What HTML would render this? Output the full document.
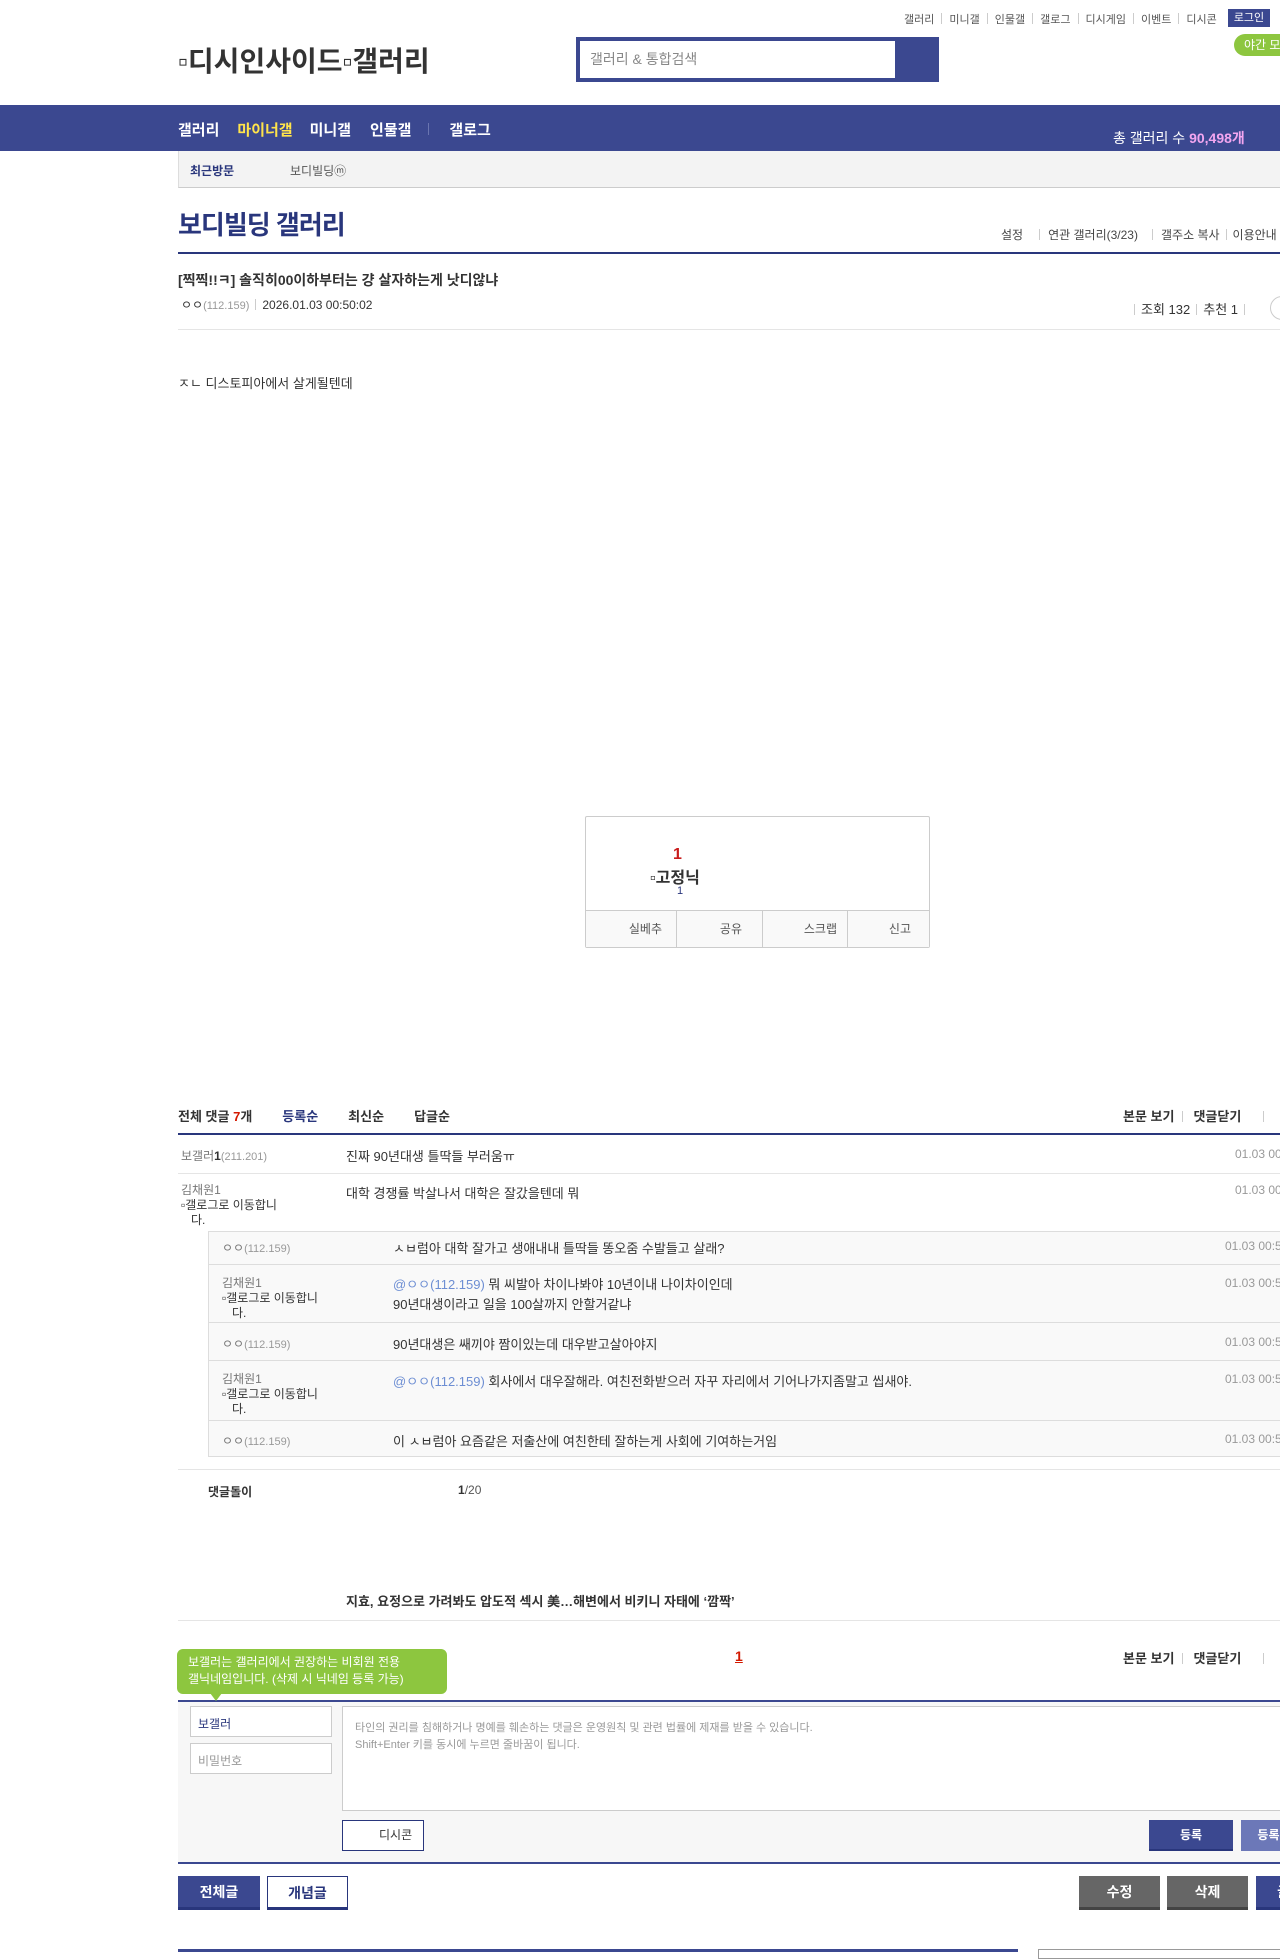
<!DOCTYPE html>
<html><head><meta charset="utf-8">
<style>
*{margin:0;padding:0;box-sizing:border-box}
body{width:1280px;height:1956px;overflow:hidden;position:relative;background:#fff;font-family:"Liberation Sans","Noto Sans CJK KR",sans-serif;font-size:13px;color:#333}
.a{position:absolute;white-space:nowrap}
.sep{display:inline-block;width:1px;height:11px;background:#ccc;margin:0 6px;vertical-align:-1px}
.gray{color:#999}
.line{position:absolute;left:178px;right:0;height:1px;background:#e5e5e5}
.btn{position:absolute;height:34px;color:#fff;font-weight:bold;font-size:14px;text-align:center;line-height:32px}
.rb{position:absolute;top:911px;height:36px;line-height:36px;font-size:12px;color:#555;text-align:right;background:#f9f9f9}
</style></head><body>
<!-- top links -->
<div class="a" style="left:904px;top:11px;font-size:11px;color:#555">갤러리<span class="sep" style="margin:0 7px"></span>미니갤<span class="sep" style="margin:0 7px"></span>인물갤<span class="sep" style="margin:0 7px"></span>갤로그<span class="sep" style="margin:0 7px"></span>디시게임<span class="sep" style="margin:0 7px"></span>이벤트<span class="sep" style="margin:0 7px"></span>디시콘</div>
<div class="a" style="left:1228px;top:9px;width:42px;height:18px;background:#3b4890;color:#fff;font-size:11px;text-align:center;line-height:18px">로그인</div>
<div class="a" style="left:1234px;top:34px;width:60px;height:22px;background:#8dc63f;color:#fff;font-size:12px;border-radius:11px;line-height:22px;padding-left:10px">야간 모드</div>
<div class="a" style="left:178px;top:40px;font-size:28px;color:#333;font-weight:bold">▫디시인사이드▫갤러리</div>
<div class="a" style="left:576px;top:37px;width:363px;height:45px;background:#3b4890"></div>
<div class="a" style="left:580px;top:41px;width:315px;height:37px;background:#fff;color:#888;font-size:14px;line-height:37px;padding-left:10px">갤러리 &amp; 통합검색</div>
<!-- nav -->
<div class="a" style="left:0;top:105px;width:1280px;height:46px;background:#3b4890"></div>
<div class="a" style="left:178px;top:119px;font-size:15px;font-weight:bold;color:#fff">갤러리<span style="color:#ffe44b;margin-left:18px">마이너갤</span><span style="margin-left:17px">미니갤</span><span style="margin-left:19px">인물갤</span><span style="display:inline-block;width:1px;height:12px;background:#6a75b0;margin:0 20px 0 17px"></span>갤로그</div>
<div class="a" style="left:1113px;top:128px;font-size:14px;color:#fff">총 갤러리 수 <b style="color:#f3a6f0">90,498개</b></div>
<div class="a" style="left:178px;top:151px;width:1110px;height:37px;background:#f3f3f3;border-left:1px solid #ddd;border-bottom:1px solid #ccc"></div>
<div class="a" style="left:190px;top:162px;font-size:12px;font-weight:bold;color:#29367c">최근방문</div>
<div class="a" style="left:290px;top:162px;font-size:12px;color:#555">보디빌딩ⓜ</div>
<!-- title -->
<div class="a" style="left:178px;top:205px;font-size:26px;font-weight:bold;color:#29367c;letter-spacing:-1px">보디빌딩 갤러리</div>
<div class="a" style="left:1001px;top:226px;font-size:12px;color:#444">설정<span class="sep" style="margin:0 8px 0 16px"></span>연관 갤러리(3/23)<span class="sep" style="margin:0 8px 0 14px"></span>갤주소 복사<span class="sep"></span>이용안내</div>
<div class="a" style="left:178px;top:252px;width:1110px;height:2px;background:#29367c"></div>
<div class="a" style="left:178px;top:270px;font-size:14px;font-weight:bold;color:#333">[찍찍!!ㅋ] 솔직히00이하부터는 걍 살자하는게 낫디않냐</div>
<div class="a" style="left:181px;top:296px;font-size:12px;color:#333">ㅇㅇ<span class="gray" style="font-size:11px">(112.159)</span><span class="sep"></span>2026.01.03 00:50:02</div>
<div class="a" style="left:1128px;top:299px;font-size:13px;color:#333"><span class="sep"></span>조회 132<span class="sep"></span>추천 1<span class="sep"></span></div>
<div class="a" style="left:1270px;top:296px;width:24px;height:24px;border:1px solid #ccc;border-radius:12px"></div>
<div class="line" style="top:329px"></div>
<div class="a" style="left:178px;top:373px;font-size:13px;color:#333">ㅈㄴ 디스토피아에서 살게될텐데</div>
<!-- recommend box -->
<div class="a" style="left:585px;top:816px;width:345px;height:132px;border:1px solid #ccc;border-radius:2px"></div>
<div class="a" style="left:673px;top:846px;font-size:16px;font-weight:bold;color:#c91c1c">1</div>
<div class="a" style="left:650px;top:864px;font-size:16px;font-weight:bold;color:#333">▫고정닉</div>
<div class="a" style="left:677px;top:885px;font-size:11px;color:#29367c">1</div>
<div class="a" style="left:586px;top:910px;width:343px;height:1px;background:#ccc"></div>
<div class="rb" style="left:586px;width:91px;padding-right:14px;border-right:1px solid #ccc">실베추</div>
<div class="rb" style="left:677px;width:86px;padding-right:20px;border-right:1px solid #ccc">공유</div>
<div class="rb" style="left:763px;width:85px;padding-right:10px;border-right:1px solid #ccc">스크랩</div>
<div class="rb" style="left:848px;width:81px;padding-right:18px">신고</div>
<!-- comments -->
<div class="a" style="left:178px;top:1106px;font-size:13px;font-weight:bold;color:#333">전체 댓글 <span style="color:#d31900">7</span>개<span style="color:#29367c;margin-left:30px">등록순</span><span style="margin-left:30px">최신순</span><span style="margin-left:30px">답글순</span></div>
<div class="a" style="left:1123px;top:1106px;font-size:13px;font-weight:bold;color:#333">본문 보기<span class="sep" style="margin:0 10px 0 8px"></span>댓글닫기<span class="sep" style="margin-left:22px"></span></div>
<div class="a" style="left:178px;top:1133px;width:1110px;height:2px;background:#29367c"></div>
<div class="a" style="left:181px;top:1147px;font-size:12px;color:#777">보갤러<b style="color:#333">1</b><span style="font-size:11px;color:#999">(211.201)</span></div>
<div class="a" style="left:346px;top:1146px;font-size:13px">진짜 90년대생 틀딱들 부러움ㅠ</div>
<div class="a" style="left:1235px;top:1147px;font-size:12px;color:#999">01.03 00:50</div>
<div class="line" style="top:1173px"></div>
<div class="a" style="left:181px;top:1183px;font-size:12px;color:#777;line-height:15px">김채원1<br><span style="color:#333">▫갤로그로 이동합니<br>&nbsp;&nbsp;&nbsp;다.</span></div>
<div class="a" style="left:346px;top:1183px;font-size:13px">대학 경쟁률 박살나서 대학은 잘갔을텐데 뭐</div>
<div class="a" style="left:1235px;top:1183px;font-size:12px;color:#999">01.03 00:50</div>
<div class="a" style="left:208px;top:1231px;width:1080px;height:226px;background:#f9f9f9;border:1px solid #ddd"></div>
<div class="a" style="left:208px;top:1264px;width:1080px;height:1px;background:#ddd"></div>
<div class="a" style="left:208px;top:1322px;width:1080px;height:1px;background:#ddd"></div>
<div class="a" style="left:208px;top:1360px;width:1080px;height:1px;background:#ddd"></div>
<div class="a" style="left:208px;top:1420px;width:1080px;height:1px;background:#ddd"></div>
<div class="a" style="left:222px;top:1239px;font-size:12px;color:#777">ㅇㅇ<span style="font-size:11px;color:#999">(112.159)</span></div>
<div class="a" style="left:393px;top:1238px;font-size:13px">ㅅㅂ럼아 대학 잘가고 생애내내 틀딱들 똥오줌 수발들고 살래?</div>
<div class="a" style="left:1225px;top:1239px;font-size:12px;color:#999">01.03 00:51</div>
<div class="a" style="left:222px;top:1276px;font-size:12px;color:#777;line-height:15px">김채원1<br><span style="color:#333">▫갤로그로 이동합니<br>&nbsp;&nbsp;&nbsp;다.</span></div>
<div class="a" style="left:393px;top:1275px;font-size:13px;line-height:20px"><span style="color:#6d8ed3">@ㅇㅇ(112.159)</span> 뭐 씨발아 차이나봐야 10년이내 나이차이인데<br>90년대생이라고 일을 100살까지 안할거같냐</div>
<div class="a" style="left:1225px;top:1276px;font-size:12px;color:#999">01.03 00:51</div>
<div class="a" style="left:222px;top:1335px;font-size:12px;color:#777">ㅇㅇ<span style="font-size:11px;color:#999">(112.159)</span></div>
<div class="a" style="left:393px;top:1334px;font-size:13px">90년대생은 쌔끼야 짬이있는데 대우받고살아야지</div>
<div class="a" style="left:1225px;top:1335px;font-size:12px;color:#999">01.03 00:51</div>
<div class="a" style="left:222px;top:1372px;font-size:12px;color:#777;line-height:15px">김채원1<br><span style="color:#333">▫갤로그로 이동합니<br>&nbsp;&nbsp;&nbsp;다.</span></div>
<div class="a" style="left:393px;top:1371px;font-size:13px"><span style="color:#6d8ed3">@ㅇㅇ(112.159)</span> 회사에서 대우잘해라. 여친전화받으러 자꾸 자리에서 기어나가지좀말고 씹새야.</div>
<div class="a" style="left:1225px;top:1372px;font-size:12px;color:#999">01.03 00:52</div>
<div class="a" style="left:222px;top:1432px;font-size:12px;color:#777">ㅇㅇ<span style="font-size:11px;color:#999">(112.159)</span></div>
<div class="a" style="left:393px;top:1431px;font-size:13px">이 ㅅㅂ럼아 요즘같은 저출산에 여친한테 잘하는게 사회에 기여하는거임</div>
<div class="a" style="left:1225px;top:1432px;font-size:12px;color:#999">01.03 00:52</div>
<div class="line" style="top:1469px"></div>
<div class="a" style="left:208px;top:1483px;font-size:12px;font-weight:bold">댓글돌이</div>
<div class="a" style="left:458px;top:1483px;font-size:12px;color:#555"><b style="color:#333">1</b>/20</div>
<div class="a" style="left:346px;top:1591px;font-size:13px;font-weight:bold">지효, 요정으로 가려봐도 압도적 섹시 美…해변에서 비키니 자태에 ‘깜짝’</div>
<div class="line" style="top:1620px"></div>
<div class="a" style="left:735px;top:1648px;font-size:14px;font-weight:bold;color:#d31900;text-decoration:underline">1</div>
<div class="a" style="left:1123px;top:1648px;font-size:13px;font-weight:bold;color:#333">본문 보기<span class="sep" style="margin:0 10px 0 8px"></span>댓글닫기<span class="sep" style="margin-left:22px"></span></div>
<!-- form -->
<div class="a" style="left:178px;top:1700px;width:1110px;height:2px;background:#3b4890"></div>
<div class="a" style="left:178px;top:1702px;width:1110px;height:160px;background:#f7f7f7"></div>
<div class="a" style="left:177px;top:1649px;width:270px;height:45px;background:#8dc63f;border-radius:6px;color:#fff;font-size:12px;line-height:17px;padding:5px 0 0 11px;white-space:normal">보갤러는 갤러리에서 권장하는 비회원 전용<br>갤닉네임입니다. (삭제 시 닉네임 등록 가능)</div>
<div class="a" style="left:210px;top:1693px;width:0;height:0;border-left:6px solid transparent;border-right:6px solid transparent;border-top:8px solid #8dc63f"></div>
<div class="a" style="left:190px;top:1706px;width:142px;height:31px;background:#fff;border:1px solid #ccc;padding:8px 7px;font-size:12px;color:#29367c">보갤러</div>
<div class="a" style="left:190px;top:1743px;width:142px;height:31px;background:#fff;border:1px solid #ccc;padding:8px 7px;font-size:12px;color:#999">비밀번호</div>
<div class="a" style="left:342px;top:1706px;width:950px;height:105px;background:#fff;border:1px solid #ccc;padding:13px 12px;font-size:11px;color:#999;line-height:17px">타인의 권리를 침해하거나 명예를 훼손하는 댓글은 운영원칙 및 관련 법률에 제재를 받을 수 있습니다.<br>Shift+Enter 키를 동시에 누르면 줄바꿈이 됩니다.</div>
<div class="a" style="left:342px;top:1820px;width:82px;height:31px;background:#fff;border:1px solid #29367c;font-size:12px;line-height:29px;padding-left:36px;color:#333">디시콘</div>
<div class="btn" style="left:1149px;top:1820px;width:84px;height:31px;line-height:31px;background:#3b4890;font-size:12px;border-bottom:2px solid #29367c">등록</div>
<div class="btn" style="left:1241px;top:1820px;width:84px;height:31px;line-height:31px;background:#6c78b8;font-size:12px">등록+추천</div>
<div class="a" style="left:178px;top:1862px;width:1110px;height:2px;background:#3b4890"></div>
<div class="btn" style="left:178px;top:1876px;width:82px;background:#3b4890;border-bottom:3px solid #29367c">전체글</div>
<div class="btn" style="left:267px;top:1876px;width:81px;background:#fff;color:#29367c;border:1px solid #29367c;border-bottom:3px solid #29367c">개념글</div>
<div class="btn" style="left:1079px;top:1876px;width:81px;background:#666;border-bottom:3px solid #444">수정</div>
<div class="btn" style="left:1167px;top:1876px;width:81px;background:#666;border-bottom:3px solid #444">삭제</div>
<div class="btn" style="left:1256px;top:1876px;width:81px;background:#3b4890;border-bottom:3px solid #29367c">글쓰기</div>
<div class="a" style="left:178px;top:1949px;width:840px;height:3px;background:#3b4890"></div>
<div class="a" style="left:1038px;top:1949px;width:260px;height:10px;border:1px solid #999"></div>
</body></html>
